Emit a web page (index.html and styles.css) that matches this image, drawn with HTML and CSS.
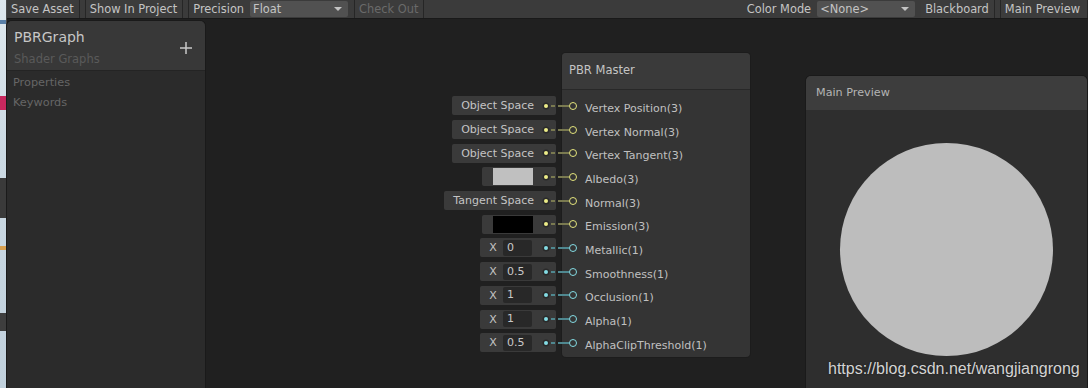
FILE: index.html
```html
<!DOCTYPE html>
<html lang="en">
<head>
    <meta charset="UTF-8">
    <title>PBRGraph</title>
    <link rel="stylesheet" href="styles.css">
</head>
<body>
    <!-- desktop behind the window -->
    <div class="desk">
        <div class="desk-icon di-1"></div>
        <div class="desk-icon di-2"></div>
        <div class="desk-icon di-3"></div>
        <div class="desk-icon di-4"></div>
        <div class="desk-icon di-5"></div>
    </div>

    <div class="editor">
        <!-- Toolbar -->
        <div class="toolbar">
            <div class="tb-btn">Save Asset</div>
            <div class="tb-btn">Show In Project</div>
            <div class="tb-label">Precision</div>
            <div class="tb-drop tb-drop-precision"><span>Float</span><span class="arrow"></span></div>
            <div class="tb-btn disabled">Check Out</div>
            <div class="tb-space"></div>
            <div class="tb-label">Color Mode</div>
            <div class="tb-drop tb-drop-color"><span>&lt;None&gt;</span><span class="arrow"></span></div>
            <div class="tb-btn">Blackboard</div>
            <div class="tb-btn last">Main Preview</div>
        </div>

        <!-- Graph canvas -->
        <div class="canvas">
            <div class="blackboard">
                <div class="bb-header">
                    <div class="bb-titles">
                        <div class="bb-title">PBRGraph</div>
                        <div class="bb-sub">Shader Graphs</div>
                    </div>
                    <svg class="bb-add" width="14" height="14" viewBox="0 0 14 14">
                        <path d="M7 1 V13 M1 7 H13" stroke="#c8c8c8" stroke-width="1.5" fill="none"/>
                    </svg>
                </div>
                <div class="bb-body">
                    <div class="bb-section">Properties</div>
                    <div class="bb-section">Keywords</div>
                </div>
            </div>

            <div class="node">
                <div class="node-title">PBR Master</div>
                <div class="node-ports">
                    <div class="port vec3">
                        <div class="chip"><span class="chip-text">Object Space</span><span class="dot"></span></div>
                        <span class="wire"></span><span class="port-ring"></span><span class="port-name">Vertex Position(3)</span>
                    </div>
                    <div class="port vec3">
                        <div class="chip"><span class="chip-text">Object Space</span><span class="dot"></span></div>
                        <span class="wire"></span><span class="port-ring"></span><span class="port-name">Vertex Normal(3)</span>
                    </div>
                    <div class="port vec3">
                        <div class="chip"><span class="chip-text">Object Space</span><span class="dot"></span></div>
                        <span class="wire"></span><span class="port-ring"></span><span class="port-name">Vertex Tangent(3)</span>
                    </div>
                    <div class="port vec3">
                        <div class="chip chip-color"><span class="swatch light"></span><span class="dot"></span></div>
                        <span class="wire"></span><span class="port-ring"></span><span class="port-name">Albedo(3)</span>
                    </div>
                    <div class="port vec3">
                        <div class="chip"><span class="chip-text">Tangent Space</span><span class="dot"></span></div>
                        <span class="wire"></span><span class="port-ring"></span><span class="port-name">Normal(3)</span>
                    </div>
                    <div class="port vec3">
                        <div class="chip chip-color"><span class="swatch dark"></span><span class="dot"></span></div>
                        <span class="wire"></span><span class="port-ring"></span><span class="port-name">Emission(3)</span>
                    </div>
                    <div class="port vec1">
                        <div class="chip chip-float"><span class="axis">X</span><span class="field">0</span><span class="dot"></span></div>
                        <span class="wire"></span><span class="port-ring"></span><span class="port-name">Metallic(1)</span>
                    </div>
                    <div class="port vec1">
                        <div class="chip chip-float"><span class="axis">X</span><span class="field">0.5</span><span class="dot"></span></div>
                        <span class="wire"></span><span class="port-ring"></span><span class="port-name">Smoothness(1)</span>
                    </div>
                    <div class="port vec1">
                        <div class="chip chip-float"><span class="axis">X</span><span class="field">1</span><span class="dot"></span></div>
                        <span class="wire"></span><span class="port-ring"></span><span class="port-name">Occlusion(1)</span>
                    </div>
                    <div class="port vec1">
                        <div class="chip chip-float"><span class="axis">X</span><span class="field">1</span><span class="dot"></span></div>
                        <span class="wire"></span><span class="port-ring"></span><span class="port-name">Alpha(1)</span>
                    </div>
                    <div class="port vec1">
                        <div class="chip chip-float"><span class="axis">X</span><span class="field">0.5</span><span class="dot"></span></div>
                        <span class="wire"></span><span class="port-ring"></span><span class="port-name">AlphaClipThreshold(1)</span>
                    </div>
                </div>
            </div>

            <div class="preview">
                <div class="preview-title">Main Preview</div>
                <div class="preview-body">
                    <div class="sphere"></div>
                </div>
            </div>
        </div>
    </div>

    <div class="watermark">https://blog.csdn.net/wangjiangrong</div>
</body>
</html>
```

FILE: styles.css
```css
/* General */
body {
    margin: 0;
    width: 1088px;
    height: 388px;
    overflow: hidden;
    display: flex;
    background-color: #202020;
    font-family: "DejaVu Sans", Verdana, sans-serif;
    color: #c4c4c4;
    position: relative;
}

/* Desktop strip on the left */
.desk {
    width: 6px;
    flex-shrink: 0;
    background: linear-gradient(180deg, #dfe8ee 0%, #cbd9e3 40%, #c0d0dc 100%);
    border-right: 1px solid #4a4a4a;
    position: relative;
}

.desk-icon {
    position: absolute;
    left: 0;
    width: 6px;
}

.di-1 { top: 20px; height: 4px; background: #5a80a8; }
.di-2 { top: 96px; height: 14px; background: #c8285e; }
.di-3 { top: 178px; height: 40px; background: #3a3a3a; }
.di-4 { top: 246px; height: 4px; background: #d8a050; }
.di-5 { top: 313px; height: 18px; background: #3e3e3e; }

.editor {
    flex: 1;
    display: flex;
    flex-direction: column;
    min-width: 0;
}

/* Toolbar */
.toolbar {
    height: 18px;
    display: flex;
    align-items: stretch;
    background-color: #3b3b3b;
    border-bottom: 1px solid #191919;
    font-size: 11.4px;
    line-height: 18px;
    white-space: nowrap;
}

.tb-btn {
    padding: 0 5px 0 4px;
    border-right: 1px solid #262626;
    margin-right: 5px;
    background-color: #3c3c3c;
}

.tb-btn + .tb-btn,
.tb-btn + .tb-label {
    border-left: 1px solid #262626;
}

.tb-btn.disabled {
    color: #6a6a6a;
    border-left: 1px solid #262626;
}

.tb-btn.last {
    margin-right: 0;
    padding-right: 7px;
}

.tb-label {
    padding: 0 6px 0 4px;
}

.tb-space {
    flex: 1;
}

.tb-drop {
    margin: 1px 6px 1px 0;
    padding: 0 6px 0 3px;
    background-color: #515151;
    border-radius: 2px;
    line-height: 16px;
    display: flex;
    justify-content: space-between;
    align-items: center;
}

.tb-drop-precision { width: 89px; }
.tb-drop-color { width: 89px; margin-right: 6px; }

.tb-drop .arrow {
    width: 0;
    height: 0;
    border-left: 4px solid transparent;
    border-right: 4px solid transparent;
    border-top: 4px solid #c4c4c4;
}

/* Canvas */
.canvas {
    flex: 1;
    position: relative;
}

/* Blackboard */
.blackboard {
    position: absolute;
    left: 0;
    top: 2px;
    width: 198px;
    height: 367px;
    background-color: #2b2b2b;
    border-radius: 5px 5px 0 0;
    box-shadow: 0 0 0 1px #1a1a1a;
}

.bb-header {
    height: 49px;
    display: flex;
    align-items: center;
    justify-content: space-between;
    padding: 0 12px 0 7px;
    background-color: #383838;
    border-radius: 5px 5px 0 0;
    border-bottom: 1px solid #242424;
}

.bb-title {
    font-size: 14px;
    line-height: 18px;
    margin-top: 3px;
    color: #c6c6c6;
}

.bb-sub {
    font-size: 11.5px;
    line-height: 14px;
    margin-top: 6px;
    color: #5a5a5a;
}

.bb-add {
    margin-top: 4px;
}

.bb-body {
    padding: 2px 6px;
}

.bb-section {
    font-size: 11.3px;
    line-height: 20px;
    color: #666666;
}

/* Master node */
.node {
    position: absolute;
    left: 555px;
    top: 34px;
    width: 188px;
    height: 304px;
    background-color: #343434;
    border-radius: 4px;
    box-shadow: 0 0 0 1px #1c1c1c;
}

.node-title {
    height: 36px;
    line-height: 35px;
    padding-left: 7px;
    font-size: 11.5px;
    color: #c4c4c4;
    background-color: #3a3a3a;
    border-radius: 4px 4px 0 0;
    border-bottom: 1px solid #282828;
}

.node-ports {
    padding-top: 4px;
    display: flex;
    flex-direction: column;
}

.port {
    height: 23.7px;
    display: flex;
    align-items: center;
    position: relative;
}

.port-ring {
    width: 6px;
    height: 6px;
    margin-left: 7px;
    border-radius: 50%;
    border: 1.5px solid;
    flex-shrink: 0;
}

.port-name {
    margin-left: 8px;
    padding-top: 5px;
    font-size: 11px;
    color: #c0c0c0;
    white-space: nowrap;
}

.wire {
    position: absolute;
    left: -13px;
    top: 50%;
    width: 20px;
    height: 2px;
    margin-top: -1px;
}

.vec3 .port-ring { border-color: #e4e47c; }
.vec1 .port-ring { border-color: #84dce4; }

.vec3 .wire {
    background: linear-gradient(90deg, transparent 0 2px, #7a7a50 2px 6px, transparent 6px 9px, #7a7a50 9px 100%);
}

.vec1 .wire {
    background: linear-gradient(90deg, transparent 0 2px, #4f8890 2px 6px, transparent 6px 9px, #4f8890 9px 100%);
}

/* Input chips left of the node */
.chip {
    position: absolute;
    right: calc(100% + 6px);
    top: 50%;
    height: 19px;
    margin-top: -9.5px;
    display: flex;
    align-items: center;
    padding: 0 8px 0 9px;
    background-color: #3a3a3a;
    border-radius: 2px;
    font-size: 11px;
    white-space: nowrap;
    box-sizing: border-box;
}

.chip-text {
    color: #c4c4c4;
    margin-right: 10px;
}

.dot {
    width: 4px;
    height: 4px;
    border-radius: 50%;
    margin-left: auto;
    box-shadow: 0 0 0 1.5px #2a2a2a;
}

.vec3 .dot { background-color: #ecec88; }
.vec1 .dot { background-color: #84dce4; }

.chip-color {
    width: 74px;
    padding-left: 11px;
}

.swatch {
    width: 40px;
    height: 17px;
}

.swatch.light { background-color: #c0c0c0; }
.swatch.dark { background-color: #000000; }

.chip-float {
    width: 76px;
    padding-left: 8px;
}

.axis {
    width: 10px;
    text-align: center;
    color: #c4c4c4;
}

.field {
    margin-left: 5px;
    width: 29px;
    height: 16px;
    line-height: 16px;
    padding-left: 4px;
    box-sizing: border-box;
    background-color: #282828;
    border-radius: 2px;
    color: #c8c8c8;
}

/* Main preview */
.preview {
    position: absolute;
    left: 799px;
    top: 57px;
    width: 281px;
    height: 312px;
    background-color: #2e2e2e;
    border-radius: 5px 5px 0 0;
    box-shadow: 0 0 0 1px #1a1a1a;
}

.preview-title {
    height: 34px;
    line-height: 33px;
    padding-left: 10px;
    font-size: 11.2px;
    color: #b4b4b4;
    background-color: #3d3d3d;
    border-radius: 5px 5px 0 0;
}

.preview-body {
    padding-top: 33px;
}

.sphere {
    width: 213px;
    height: 213px;
    margin: 0 auto;
    border-radius: 50%;
    background-color: #bdbdbd;
}

/* Watermark */
.watermark {
    position: absolute;
    left: 828px;
    top: 359px;
    font-family: "Liberation Sans", Arial, sans-serif;
    font-size: 16px;
    line-height: 20px;
    color: #d4d4d4;
    text-shadow: 0 0 2px #1a1a1a;
}
```
